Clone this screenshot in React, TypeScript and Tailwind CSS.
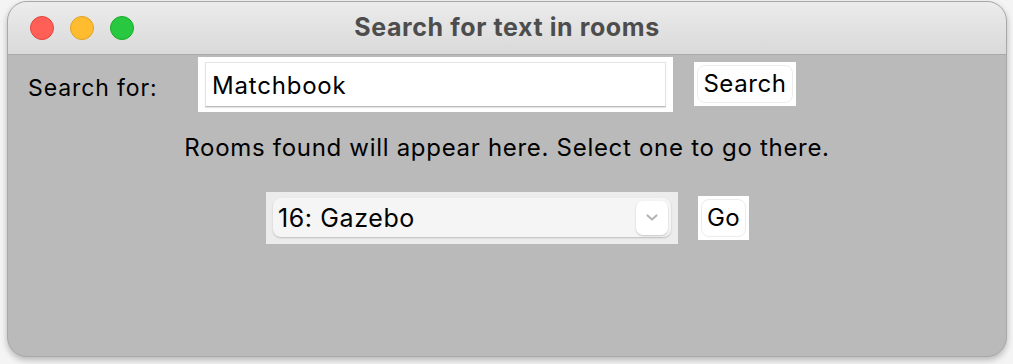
import React from "react";

const font = { fontFamily: 'Inter, "Liberation Sans", Arial, sans-serif' };

function Lights() {
  return (
    <div className="flex items-center gap-[16px]">
      <span className="h-[24px] w-[24px] rounded-full border border-[#e0443e] bg-[#ff5f57]" />
      <span className="h-[24px] w-[24px] rounded-full border border-[#dea123] bg-[#febc2e]" />
      <span className="h-[24px] w-[24px] rounded-full border border-[#1aab29] bg-[#28c840]" />
    </div>
  );
}

export default function App() {
  return (
    <div className="h-[364px] w-[1013px] bg-[#f4f4f4] pl-[7px] pt-[1px]" style={font}>
      <div className="flex h-[356px] w-[1000px] flex-col overflow-hidden rounded-[20px] border border-[#a8a8a8] bg-[#bababa] shadow-[0_3px_6px_rgba(0,0,0,0.25)]">
        {/* title bar */}
        <div className="relative flex h-[53px] shrink-0 items-center border-b border-[#a9a9a9] bg-gradient-to-b from-[#ececec] to-[#d9d9d9] pl-[22px]">
          <Lights />
          <div className="absolute inset-0 flex items-center justify-center text-[25px] font-bold tracking-[0.6px] text-[#4d4d4d]">
            Search for text in rooms
          </div>
        </div>

        {/* search row */}
        <div className="flex items-start pt-[2px]">
          <div className="ml-[20px] mt-[14px] w-[170px] text-[23px] tracking-[0.9px] text-black">Search for:</div>
          <div className="h-[55px] w-[475px] bg-white px-[7px] pt-[5px]">
            <div className="flex h-[45px] items-center border border-[#e4e4e4] border-b-[#bdbdbd] pl-[6px] pt-[3px] text-[24px] tracking-[0.8px] text-black shadow-[0_1px_1px_rgba(0,0,0,0.1)]">
              Matchbook
            </div>
          </div>
          <div className="ml-[21px] mt-[5px] h-[44px] w-[102px] bg-white p-[3px]">
            <div className="flex h-full items-center justify-center rounded-[8px] border border-[#ececec] pb-[1px] text-[24px] tracking-[0.6px] text-black">
              Search
            </div>
          </div>
        </div>

        <div className="mt-[18px] text-center text-[24px] tracking-[0.7px] text-black">
          Rooms found will appear here. Select one to go there.
        </div>

        {/* room row */}
        <div className="mt-[26px] flex items-start">
          <div className="ml-[258px] h-[52px] w-[412px] bg-[#ececec] px-[7px] pt-[6px]">
            <div className="flex h-[39px] items-center justify-between rounded-[8px] bg-[#f5f5f5] pl-[5px] pr-[3px] text-[25px] tracking-[0.6px] text-black shadow-[0_1px_2px_rgba(0,0,0,0.2)]">
              <span className="pt-[2px]">16: Gazebo</span>
              <span className="flex h-[34px] w-[32px] items-center justify-center rounded-[7px] bg-white shadow-[0_1px_2px_rgba(0,0,0,0.2)]">
                <svg width="14" height="9" viewBox="0 0 14 9">
                  <path d="M2.5 2.5 L7 6.5 L11.5 2.5" fill="none" stroke="#b5b5b5" strokeWidth="2.2" strokeLinecap="round" strokeLinejoin="round" />
                </svg>
              </span>
            </div>
          </div>
          <div className="ml-[20px] mt-[4px] h-[44px] w-[51px] bg-white p-[3px]">
            <div className="flex h-full items-center justify-center rounded-[8px] border border-[#ececec] pb-[1px] text-[24px] tracking-[0.3px] text-black">
              Go
            </div>
          </div>
        </div>
      </div>
    </div>
  );
}
